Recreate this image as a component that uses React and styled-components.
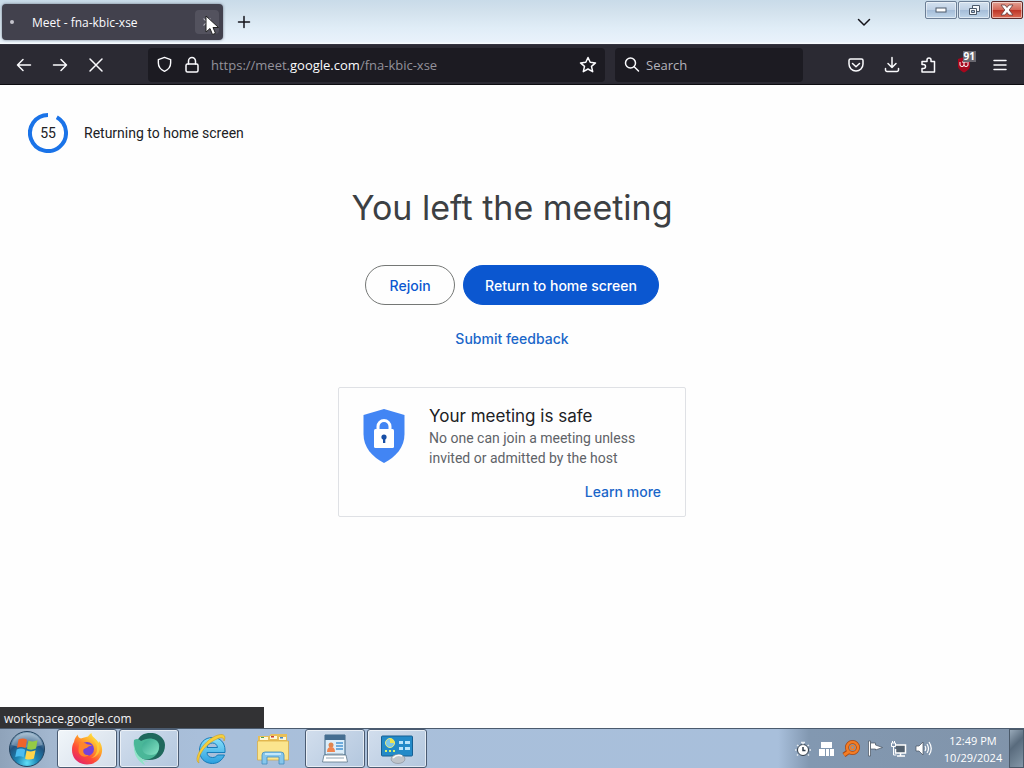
import React from "react";
import styled, { createGlobalStyle } from "styled-components";

const ui = '"Open Sans", "Noto Sans", sans-serif';
const brand = 'Inter, "Liberation Sans", sans-serif';
const body = 'Roboto, "Liberation Sans", sans-serif';

const GlobalStyle = createGlobalStyle`
  *, *::before, *::after { box-sizing: border-box; }
  body { margin: 0; background: #fefefe; font-family: ${body}; }
  button, input { font: inherit; color: inherit; margin: 0; }
  h1, h2, p { margin: 0; font-weight: 400; }
`;

const Desktop = styled.div`
  position: relative;
  display: flex;
  flex-direction: column;
  min-height: 100vh;
`;

/* ---------- Window title bar ---------- */
const TitleBar = styled.header`
  display: flex;
  align-items: flex-start;
  height: 44px;
  padding-left: 2px;
  background: linear-gradient(#c9dbe9 0, #d3e2ed 12px, #e0edf7 28px, #e9f2fb 42px, #f6fafd 43px);
  font-family: ${ui};
`;

const Tab = styled.div`
  position: relative;
  display: flex;
  align-items: center;
  flex: 0 1 221px;
  height: 36px;
  margin-top: 4px;
  padding: 0 4px 0 8px;
  border-radius: 4px;
  background: #42414d;
  color: #fbfbfe;
  font-size: 12px;
  box-shadow: 0 0 3px rgba(40, 50, 70, 0.6);
`;

const LoadingDot = styled.span`
  width: 4px;
  height: 4px;
  margin-right: 18px;
  border-radius: 50%;
  background: #c4c3cc;
`;

const TabTitle = styled.span`
  flex: 1;
  white-space: nowrap;
`;

const TabClose = styled.button`
  display: grid;
  place-items: center;
  width: 24px;
  height: 24px;
  padding: 0;
  border: 0;
  border-radius: 4px;
  background: #53525e;
  color: #b9b8c2;
`;

const Pointer = styled.svg`
  position: absolute;
  left: 203px;
  top: 11px;
  z-index: 2;
`;

const TitleButton = styled.button`
  display: grid;
  place-items: center;
  width: 32px;
  height: 36px;
  margin: 4px 0 0 5px;
  padding: 0;
  border: 0;
  background: transparent;
  color: #15141a;
`;

const Spacer = styled.div`
  flex: 1;
`;

const WindowControls = styled.div`
  display: flex;
  gap: 1px;
  margin: 1px 1px 0 45px;
`;

const WindowButton = styled.button`
  display: grid;
  place-items: center;
  width: 32px;
  height: 18px;
  padding: 0;
  border: 1px solid ${(p) => (p.$danger ? "#5c2a2a" : "#6c7f96")};
  border-radius: 2px;
  box-shadow: inset 0 0 0 1px rgba(255, 255, 255, 0.5);
  background: ${(p) =>
    p.$danger
      ? "linear-gradient(#e3a193 0, #d4695a 48%, #bd3527 52%, #dc6b54 100%)"
      : "linear-gradient(#d3e1ef 0, #bfd1e5 48%, #a5bdd8 52%, #c0d6ea 100%)"};
`;

/* ---------- Navigation bar ---------- */
const NavBar = styled.nav`
  display: flex;
  align-items: center;
  height: 41px;
  padding: 0 6px;
  border-top: 1px solid #34333f;
  border-bottom: 1px solid #0d0c11;
  background: #2b2a33;
  color: #fbfbfe;
  font-family: ${ui};
  font-size: 13px;
`;

const NavButton = styled.button`
  position: relative;
  display: grid;
  place-items: center;
  flex: none;
  width: 36px;
  height: 32px;
  padding: 0;
  border: 0;
  background: transparent;
  svg { display: block; }
`;

const Field = styled.div`
  display: flex;
  align-items: center;
  min-width: 0;
  height: 34px;
  border-radius: 4px;
  background: #1c1b22;
  svg { flex: none; }
`;

const AddressField = styled(Field)`
  flex: 1;
  margin-left: 34px;
  padding: 0 8px;
  gap: 10px;
`;

const SearchField = styled(Field)`
  flex: 0 0 188px;
  margin: 0 35px 0 10px;
  padding: 0 8px;
  gap: 5px;
`;

const Address = styled.a`
  flex: 1;
  color: #93929b;
  font-size: 13px;
  white-space: nowrap;
  text-decoration: none;
  strong { font-weight: 400; color: #fbfbfe; }
`;

const SearchInput = styled.input`
  flex: 1;
  min-width: 0;
  padding: 0;
  border: 0;
  outline: 0;
  background: transparent;
  &::placeholder { color: #b4b3bb; opacity: 1; }
`;

const Badge = styled.span`
  position: absolute;
  top: 2px;
  right: 6px;
  padding: 0 1px;
  background: #67666e;
  color: #fff;
  font-size: 10px;
  font-weight: 700;
  line-height: 11px;
`;

/* ---------- Meeting page ---------- */
const Page = styled.main`
  position: relative;
  flex: 1;
  padding: 28px;
  background: #fefefe;
`;

const Countdown = styled.div`
  display: flex;
  align-items: center;
  gap: 16px;
  height: 40px;
  color: #202124;
  font-size: 14px;
`;

const Ring = styled.div`
  display: grid;
  place-items: center;
  width: 40px;
  height: 40px;
  > * { grid-area: 1 / 1; }
`;

const Center = styled.section`
  display: flex;
  flex-direction: column;
  align-items: center;
  margin-top: 32px;
`;

const Heading = styled.h1`
  color: #3c4043;
  font-family: ${brand};
  font-size: 34px;
  line-height: 46px;
`;

const Actions = styled.div`
  display: flex;
  gap: 8px;
  margin-top: 34px;
`;

const Pill = styled.button`
  min-width: 90px;
  height: 40px;
  padding: 0 21px;
  border: 1px solid ${(p) => (p.$filled ? "#0b57d0" : "#747775")};
  border-radius: 20px;
  background: ${(p) => (p.$filled ? "#0b57d0" : "#fefefe")};
  color: ${(p) => (p.$filled ? "#fff" : "#0b57d0")};
  font-family: ${brand};
  font-size: 14px;
  font-weight: 500;
`;

const TextLink = styled.a`
  color: #1a66c9;
  font-family: ${brand};
  font-size: 14px;
  font-weight: 500;
  line-height: 20px;
  text-decoration: none;
`;

const Feedback = styled(TextLink)`
  margin-top: 24px;
`;

const Card = styled.article`
  width: 348px;
  margin-top: 38px;
  padding: 16px 24px 14px;
  border: 1px solid #dfe1e5;
  border-radius: 2px;
  display: flex;
  gap: 24px;
`;

const CardText = styled.div`
  flex: 1;
  display: flex;
  flex-direction: column;
`;

const CardTitle = styled.h2`
  color: #202124;
  font-family: ${brand};
  font-size: 17px;
  line-height: 24px;
`;

const CardBody = styled.p`
  color: #5f6368;
  font-size: 14px;
  line-height: 20px;
`;

const LearnMore = styled(TextLink)`
  align-self: flex-end;
  margin-top: 14px;
`;

const ShieldSlot = styled.div`
  flex: none;
  margin-top: 5px;
`;

const StatusBar = styled.div`
  position: absolute;
  left: 0;
  bottom: 0;
  width: 264px;
  height: 21px;
  padding-left: 4px;
  background: #323234;
  color: #f4f4f6;
  font-family: ${ui};
  font-size: 12px;
  line-height: 24px;
`;

/* ---------- Taskbar ---------- */
const Taskbar = styled.footer`
  display: flex;
  height: 40px;
  border-top: 1px solid #4b5b6e;
  background: linear-gradient(90deg, #8fa3ba 0, #a3b7cf 50px, #a9bfda 200px, #a8bfdb 76%, #8298b1 79%, #8194aa 100%);
  font-family: ${ui};
`;

const StartButton = styled.button`
  display: grid;
  place-items: center;
  width: 54px;
  padding: 0;
  border: 0;
  background: transparent;
`;

const Tasks = styled.div`
  display: flex;
  gap: 2px;
  margin-left: 3px;
`;

const Task = styled.button`
  display: grid;
  place-items: center;
  width: 60px;
  height: 39px;
  padding: 0;
  border: 1px solid ${(p) => (p.$open || p.$active ? "#4a5b72" : "transparent")};
  border-radius: 3px;
  box-shadow: ${(p) => (p.$open || p.$active ? "inset 0 0 0 1px rgba(255,255,255,0.6)" : "none")};
  background: ${(p) =>
    p.$active
      ? "linear-gradient(135deg, #f1f6fa, #d3dde9)"
      : p.$open
      ? "linear-gradient(135deg, #d2deed, #b3c7de)"
      : "transparent"};
`;

const Tray = styled.div`
  display: flex;
  align-items: center;
  gap: 4px;
`;

const TrayButton = styled.button`
  display: grid;
  place-items: center;
  width: 20px;
  height: 24px;
  padding: 0;
  border: 0;
  background: transparent;
`;

const Clock = styled.time`
  align-self: flex-start;
  width: 70px;
  margin-left: 5px;
  padding-top: 3px;
  color: #fff;
  font-size: 11px;
  line-height: 17px;
  text-align: center;
`;

const ShowDesktop = styled.button`
  width: 15px;
  margin-left: 1px;
  padding: 0;
  border: 1px solid #4b5a6a;
  background: linear-gradient(135deg, #98a9b9, #596b7d 40%, #8497a8);
`;

/* ---------- Icons ---------- */
const Line = ({ size = 18, w = 1.5, children }) => (
  <svg width={size} height={size} viewBox="0 0 18 18" fill="none" stroke="currentColor" strokeWidth={w} strokeLinecap="round" strokeLinejoin="round" aria-hidden="true">
    {children}
  </svg>
);

const ShieldLock = () => (
  <svg width="42" height="54" viewBox="0 0 42 54" aria-hidden="true">
    <path d="M21 0 L41.500 6 V25 C41.500 38 33 48 21 54 C9 48 .5 38 .5 25 V6Z" fill="#4285f4" />
    <rect x="11" y="20" width="20" height="19" rx="1.500" fill="#fff" />
    <path d="M15 21v-3.500a6 6 0 0 1 12 0V21" fill="none" stroke="#fff" strokeWidth="3" />
    <circle cx="21" cy="28" r="2.600" fill="#174ea6" />
    <path d="M20 28h2.300v6h-2.300z" fill="#174ea6" />
  </svg>
);

const StartOrb = () => (
  <svg width="38" height="38" viewBox="0 0 38 38" aria-hidden="true">
    <defs>
      <radialGradient id="orb" cx=".5" cy=".9" r=".85">
        <stop offset="0" stopColor="#5fe0f8" />
        <stop offset=".35" stopColor="#1d86b5" />
        <stop offset=".7" stopColor="#21537f" />
        <stop offset="1" stopColor="#8aa9c2" />
      </radialGradient>
    </defs>
    <circle cx="19" cy="19" r="17.500" fill="url(#orb)" stroke="#24435f" />
    <path d="M3.500 15A16 16 0 0 1 34.500 15Q19 20 3.500 15Z" fill="#fff" opacity=".28" />
    <path d="M10.500 9.500q4.500-2 8.500.2l-1.500 8.300q-4-2-8.500-.2z" fill="#f0642b" />
    <path d="M20.500 10.500q4.500 2 9-.2L28 18.600q-4.500 2-9 .2z" fill="#95cb45" />
    <path d="M8.700 19.500q4.500-2 8.500.2l-1.500 7.500q-4-2-8.500-.2z" fill="#4bbcf0" />
    <path d="M18.600 20.500q4.500 2 9-.2l-1.700 8.200q-4.300 2-8.800.2z" fill="#ffd54a" />
  </svg>
);

const FirefoxIcon = () => (
  <svg width="32" height="32" viewBox="0 0 32 32" aria-hidden="true">
    <defs>
      <linearGradient id="ff" x1=".85" y1=".05" x2=".2" y2=".95">
        <stop offset="0" stopColor="#fff14a" />
        <stop offset=".35" stopColor="#ffa52a" />
        <stop offset=".68" stopColor="#ff4b36" />
        <stop offset="1" stopColor="#e3246c" />
      </linearGradient>
    </defs>
    <path d="M3 9C3.500 5 6 3 6.500 1.500 7 4 8 5 10 5.500 13 4 16 4 17 3.500 18 2 19 1 20.500 0 20.500 3 23 4.500 25 6.500 26.500 8 27 9 27.500 10L28 8C32 13 32 19 29 24.500 26 29.500 21 31.500 16 31.500 7 31.500 1 25 1 17 1 14 1.500 11 3 9Z" fill="url(#ff)" />
    <circle cx="16" cy="16" r="7" fill="#7542d8" />
    <path d="M8 10c3-1 6-.5 8 1.200 2.500 0 4 .7 5 1.800-2-.3-3 0-4 1-1 1.500-3.500 1-4.500 2.500C11.500 20 14 22.500 18 22c-4 3.500-10 1-10.500-4C7.300 14.500 8.500 13 8 10Z" fill="#ff852c" />
    <path d="M20 3c2 5 7 7 6 14-.5 4-3 7-6 8 7-1 10-7 8-13-1-4-5-6-8-9z" fill="#ffd23a" opacity=".75" />
  </svg>
);

const GreenGlobe = () => (
  <svg width="34" height="32" viewBox="0 0 34 32" aria-hidden="true">
    <defs>
      <linearGradient id="globe" x1="0" y1="0" x2="1" y2="1">
        <stop offset="0" stopColor="#35a58b" />
        <stop offset="1" stopColor="#87e4c6" />
      </linearGradient>
    </defs>
    <path d="M12 1C23-3 33 4 33 12c0 9-6 15-16 15C8 27 3 20 4 11 6 5 9 2 12 1Z" fill="#1f685c" />
    <path d="M2 7C5 5 7 6 9 8c4-2 8-3 12-2 5 1 7 5 6 9-1 5-3 8-7 10-4 2-8 2-11 0C3 21 1 14 2 7Z" fill="#4ab798" />
    <path d="M14 8c6-4 13-1 13 6 0 5-3 8-8 8-6 0-9-3-9-8 0-3 2-5 4-6Z" fill="url(#globe)" />
    <path d="M2 11c1 8 4 13 10 16 2 1 3 1 5 1-3 1-6 0-7-1l3 5C6 29 1 21 2 11Z" fill="#8ee4c6" />
  </svg>
);

const IeIcon = () => (
  <svg width="34" height="34" viewBox="0 0 34 34" aria-hidden="true">
    <defs>
      <linearGradient id="ie" x1="0" y1="0" x2="0" y2="1">
        <stop offset="0" stopColor="#8be2fb" />
        <stop offset="1" stopColor="#2b9fdf" />
      </linearGradient>
    </defs>
    <path d="M31 20.500H13c0 3 2 5 5.500 5 2.500 0 4-1 5-2.500h7C28.500 28 24 31.500 18.500 31.500 10.500 31.500 5.500 26 5.500 18.500S10.500 5.500 18.500 5.500 31 11 31 18zM13 15.500h10.500c-.5-3-2.300-4.500-5-4.500s-5 1.500-5.500 4.500z" fill="url(#ie)" stroke="#167cb9" strokeWidth="1" />
    <path d="M5 31C-2 28 10 7 24 3c7-2 8 2 6 6 0-4-3-4-7-2C13 11 3 23 5 31Z" fill="#f5cf3c" stroke="#c89618" strokeWidth=".5" />
  </svg>
);

const ExplorerIcon = () => (
  <svg width="34" height="32" viewBox="0 0 34 32" aria-hidden="true">
    <path d="M2 3h11l2-2h16v26H2z" fill="#e8bf58" />
    <path d="M4 4h8v3H4zM14 3h7v3h-7zM23 4h7v3h-7z" fill="#fdf8d9" />
    <path d="M5 4h3v1H5z" fill="#43a454" />
    <path d="M15 3h3v1.500h-3z" fill="#cc3e30" />
    <path d="M24 4h3v1.500h-3z" fill="#3f84c9" />
    <path d="M1.500 8h31v19h-31z" fill="#fbe58e" stroke="#d8a93c" strokeWidth=".7" />
    <path d="M6 31V22q0-3 3-3h16q3 0 3 3v9h-5v-7H11v7z" fill="#86c6eb" stroke="#428ebf" strokeWidth=".8" />
    <path d="M9 21h16" stroke="#d9f3ff" strokeWidth="1.500" />
  </svg>
);

const DocumentIcon = () => (
  <svg width="26" height="30" viewBox="0 0 26 30" aria-hidden="true">
    <path d="M3 1h20v20H3z" fill="#dceefa" stroke="#3e6686" />
    <path d="M3 1h20v5H3z" fill="#456e91" />
    <path d="M2 21h22l1.500 7H.5z" fill="#fff" stroke="#5f788a" strokeWidth=".8" />
    <circle cx="9" cy="11" r="2.500" fill="#df8650" />
    <path d="M5 18q0-5 4-5t4 5z" fill="#ef8550" />
    <path d="M14 9h7M14 12h7M14 15h7" stroke="#4a95d2" strokeWidth="1.500" />
    <path d="M5 20h16M4 24h18" stroke="#91a4b2" />
  </svg>
);

const ControlPanelIcon = () => (
  <svg width="34" height="30" viewBox="0 0 34 30" aria-hidden="true">
    <rect x="1.500" y="2" width="31" height="20" rx="1" fill="#238ac8" stroke="#165f92" />
    <circle cx="10" cy="9" r="4.500" fill="#7cc7ea" stroke="#e9ec7c" />
    <path d="M10 9V4.500A4.500 4.500 0 0 1 14.500 9z" fill="#f0e54b" />
    <path d="M19 7h4v3h-4zM25 7h5v3h-5zM19 13h4v3h-4zM25 13h5v3h-5z" fill="#b9e4fa" />
    <path d="M5 17h2M9 17h2M13 17h2" stroke="#d4f274" strokeWidth="2" />
    <ellipse cx="18" cy="25" rx="7" ry="4.500" fill="#bfc4ca" stroke="#838a92" strokeWidth=".6" />
    <path d="M13 24q4-4 9-2" stroke="#f7f8fa" strokeWidth="1.500" fill="none" />
  </svg>
);

export default function App() {
  return (
    <Desktop>
      <GlobalStyle />
      <TitleBar>
        <Tab>
          <LoadingDot />
          <TabTitle>Meet - fna-kbic-xse</TabTitle>
          <TabClose aria-label="Close tab">
            <Line size={14}><path d="M5 5l8 8M13 5l-8 8" /></Line>
          </TabClose>
          <Pointer width="15" height="22" viewBox="0 0 15 22" aria-hidden="true">
            <path d="M1 1v16l4-3.500 2.500 6 3-1.200L8 12.500h5.500z" fill="#fff" stroke="#222" strokeWidth="1" />
          </Pointer>
        </Tab>
        <TitleButton aria-label="New tab">
          <Line><path d="M9 3.500v11M3.500 9h11" /></Line>
        </TitleButton>
        <Spacer />
        <TitleButton aria-label="List all tabs">
          <Line><path d="M3.500 6.500L9 12l5.500-5.500" /></Line>
        </TitleButton>
        <WindowControls>
          <WindowButton aria-label="Minimize">
            <svg width="12" height="6" viewBox="0 0 12 6"><rect x="1" y="1" width="10" height="4" fill="#fff" stroke="#4c5a6b" /></svg>
          </WindowButton>
          <WindowButton aria-label="Restore">
            <svg width="13" height="12" viewBox="0 0 13 12" fill="#f5f8fb" stroke="#4c5a6b"><path d="M4.500 1.500h7v6h-7z" /><path d="M1.500 4.500h7v6h-7z" /><path d="M3.500 6.500h3v2h-3z" fill="#a5bdd8" /></svg>
          </WindowButton>
          <WindowButton $danger aria-label="Close">
            <svg width="14" height="12" viewBox="0 0 14 12"><path d="M1 1h4l2 2.500L9 1h4L9.200 6 13 11H9L7 8.500 5 11H1l3.800-5z" fill="#fff" stroke="#61383a" strokeWidth=".8" /></svg>
          </WindowButton>
        </WindowControls>
      </TitleBar>

      <NavBar aria-label="Browser">
        <NavButton aria-label="Back"><Line><path d="M15.500 9H2.500M8 3.500L2.500 9 8 14.500" /></Line></NavButton>
        <NavButton aria-label="Forward"><Line><path d="M2.500 9h13M10 3.500L15.500 9 10 14.500" /></Line></NavButton>
        <NavButton aria-label="Stop"><Line><path d="M3 3l12 12M15 3L3 15" /></Line></NavButton>
        <AddressField>
          <Line size={17}><path d="M9 1.500l6.500 2.300v3.700c0 4.500-2.800 7.200-6.500 8.700-3.700-1.500-6.500-4.200-6.500-8.700V3.800z" /></Line>
          <Line><rect x="3" y="8" width="12" height="8" rx="1.500" /><path d="M5.500 8V5a3.500 3.500 0 0 1 7 0v3" /></Line>
          <Address href="#meeting">https://meet.<strong>google.com</strong>/fna-kbic-xse</Address>
          <Line><path d="M9 1.500l2.200 4.800 5.300.6-4 3.500 1.200 5.300L9 13l-4.700 2.700 1.200-5.300-4-3.500 5.300-.6z" /></Line>
        </AddressField>
        <SearchField>
          <Line><circle cx="7.500" cy="7" r="5" /><path d="M11.200 10.700L15.500 15" /></Line>
          <SearchInput aria-label="Search" placeholder="Search" />
        </SearchField>
        <NavButton aria-label="Save to Pocket">
          <Line><path d="M3.500 3h11a1.500 1.500 0 0 1 1.500 1.500V8a7 7 0 0 1-14 0V4.500A1.500 1.500 0 0 1 3.500 3zM5.500 7.500L9 10.800l3.500-3.300" /></Line>
        </NavButton>
        <NavButton aria-label="Downloads">
          <Line><path d="M9 1.500v10M5 7.500l4 4 4-4M2.500 12.500V14A1.500 1.500 0 0 0 4 15.500h10a1.500 1.500 0 0 0 1.500-1.500v-1.500" /></Line>
        </NavButton>
        <NavButton aria-label="Extensions">
          <Line><path d="M3 16V12.500h1.500a2 2 0 0 0 0-4H3V5.500h5V4a2 2 0 0 1 4 0v1.500h3.500V16z" /></Line>
        </NavButton>
        <NavButton aria-label="Ad blocker, 91 blocked">
          <svg width="16" height="18" viewBox="0 0 16 18" aria-hidden="true">
            <path d="M8 1l6 2v7c0 3-3 5-6 6.500C5 15 2 13 2 10V3z" fill="#a7071d" />
            <path d="M4 6v3q0 1.500 2 1.500T8 9V6M8 9q0 1.500 2 1.500T12 9V6M6 6h5" fill="none" stroke="#fff" />
          </svg>
          <Badge>91</Badge>
        </NavButton>
        <NavButton aria-label="Menu"><Line><path d="M3 4.500h12M3 9h12M3 13.500h12" /></Line></NavButton>
      </NavBar>

      <Page id="meeting">
        <Countdown role="timer">
          <Ring>
            <svg width="40" height="40" viewBox="0 0 40 40" fill="none" stroke="#1a73e8" strokeWidth="4" aria-hidden="true">
              <path d="M28.800 4.300A18 18 0 1 1 20 2" />
            </svg>
            <span>55</span>
          </Ring>
          <span>Returning to home screen</span>
        </Countdown>
        <Center>
          <Heading>You left the meeting</Heading>
          <Actions>
            <Pill>Rejoin</Pill>
            <Pill $filled>Return to home screen</Pill>
          </Actions>
          <Feedback href="#feedback">Submit feedback</Feedback>
          <Card>
            <ShieldSlot><ShieldLock /></ShieldSlot>
            <CardText>
              <CardTitle>Your meeting is safe</CardTitle>
              <CardBody>No one can join a meeting unless invited or admitted by the host</CardBody>
              <LearnMore href="#learn">Learn more</LearnMore>
            </CardText>
          </Card>
        </Center>
        <StatusBar>workspace.google.com</StatusBar>
      </Page>

      <Taskbar>
        <StartButton aria-label="Start"><StartOrb /></StartButton>
        <Tasks>
          <Task $active aria-label="Firefox"><FirefoxIcon /></Task>
          <Task $open aria-label="Globe"><GreenGlobe /></Task>
          <Task aria-label="Internet Explorer"><IeIcon /></Task>
          <Task aria-label="File Explorer"><ExplorerIcon /></Task>
          <Task $open aria-label="Document"><DocumentIcon /></Task>
          <Task $open aria-label="Control Panel"><ControlPanelIcon /></Task>
        </Tasks>
        <Spacer />
        <Tray>
          <TrayButton aria-label="Timer">
            <svg width="18" height="18" viewBox="0 0 18 18" fill="none" stroke="#2f3b48"><circle cx="9" cy="10" r="5.500" fill="#fff" /><path d="M9 7v3.500h2.500" strokeWidth="1.500" /><path d="M7 2.500h4M9 2.500v2M3 5l1.500 1M15 5l-1.500 1M1 10h1.500M15.500 10H17M3 15.500l1-1M15 15.500l-1-1" stroke="#e8edf2" strokeWidth="1.500" /></svg>
          </TrayButton>
          <TrayButton aria-label="Device">
            <svg width="16" height="16" viewBox="0 0 16 16" fill="#fff"><path d="M2 1h11v6H2zM0 8h6v7H0zM7 8h3v7H7zM11 8h4v7h-4z" /></svg>
          </TrayButton>
          <TrayButton aria-label="Search tool">
            <svg width="18" height="18" viewBox="0 0 18 18" fill="none"><circle cx="10.500" cy="7.500" r="5.500" stroke="#a74814" strokeWidth="4" /><path d="M2 15l4.500-3.500" stroke="#a74814" strokeWidth="5" /><circle cx="10.500" cy="7.500" r="5.500" stroke="#f37c24" strokeWidth="2.500" /><path d="M2 15l5-3.500" stroke="#f37c24" strokeWidth="3" /><circle cx="10.500" cy="7.500" r="2" stroke="#f37c24" strokeWidth="1.500" /></svg>
          </TrayButton>
          <TrayButton aria-label="Action Center">
            <svg width="17" height="17" viewBox="0 0 17 17"><path d="M1.500 1h2v15h-2z" fill="#fff" stroke="#46525e" strokeWidth=".7" /><path d="M3.500 3h5v2l7 2.500-7 2.500V9h-5z" fill="#fff" stroke="#46525e" strokeWidth=".7" /></svg>
          </TrayButton>
          <TrayButton aria-label="Network">
            <svg width="18" height="18" viewBox="0 0 18 18" fill="none" stroke="#fff"><path d="M6 5h9.500v8H5.500V9" fill="#53616f" strokeWidth="1.500" /><path d="M10.500 13v3M7 16h8" strokeWidth="1.500" /><path d="M1.500 3h4v3.500h-4zM2.500 1v2M4.500 1v2M3.500 6.500V15h3" /></svg>
          </TrayButton>
          <TrayButton aria-label="Volume">
            <svg width="17" height="17" viewBox="0 0 17 17" fill="none" stroke="#fff"><path d="M1 6h3l4-4v13l-4-4H1z" fill="#fff" stroke="#46525e" strokeWidth=".7" /><path d="M10 6q1.500 2.500 0 5M12 4q3 4.500 0 9M14 2q4.500 6.500 0 13" strokeWidth="1.200" /></svg>
          </TrayButton>
        </Tray>
        <Clock>12:49 PM<br />10/29/2024</Clock>
        <ShowDesktop aria-label="Show desktop" />
      </Taskbar>
    </Desktop>
  );
}
